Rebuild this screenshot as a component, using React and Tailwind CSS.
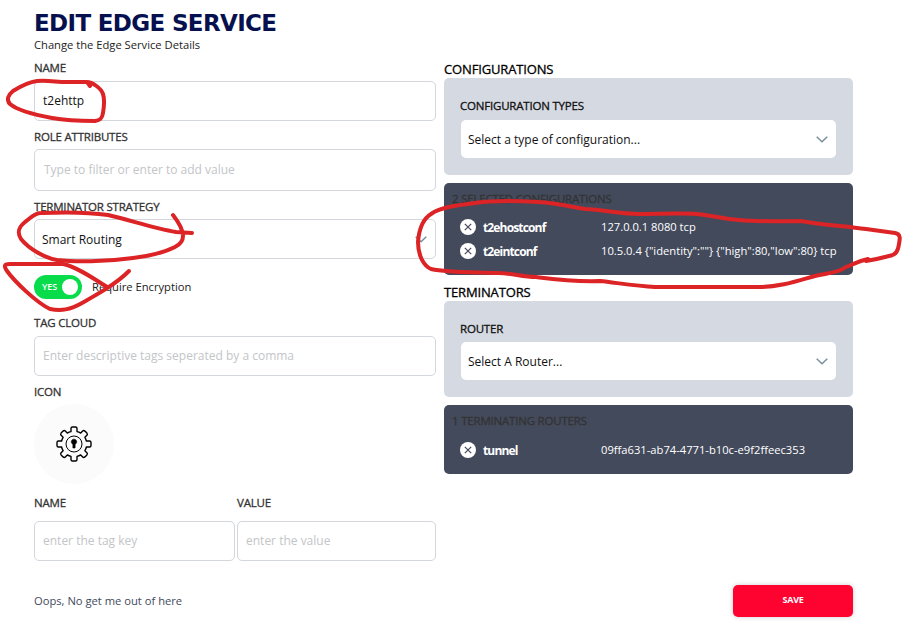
import React from "react";

const Label = ({ children, color = "text-[#333]", className = "" }) => (
  <div className={`flex items-center text-[11.5px] font-normal tracking-[-0.2px] [-webkit-text-stroke:0.3px] ${color} ${className}`}>{children}</div>
);

const Input = ({ value, placeholder, className = "" }) => (
  <div className={`flex items-center rounded-[5px] border border-[#d3d6da] bg-white pl-2 text-xs ${className}`}>
    {value ? <span className="text-[#111]">{value}</span> : <span className="text-[#c3c5c8]">{placeholder}</span>}
  </div>
);

const Chevron = () => (
  <svg width="12" height="7" viewBox="0 0 12 7" fill="none" stroke="#78909c" strokeWidth="1.5">
    <path d="M.7.8 6 5.7 11.3.8" />
  </svg>
);

const Select = ({ children, className = "" }) => (
  <div className={`flex items-center justify-between rounded-[5px] bg-white pl-[7px] pr-2 text-xs text-[#111] ${className}`}>
    <span className="pt-px">{children}</span>
    <Chevron />
  </div>
);

const Row = ({ name, value }) => (
  <div className="flex h-6 items-center text-[11.2px] text-white">
    <svg width="16" height="16" viewBox="0 0 16 16" className="shrink-0">
      <circle cx="8" cy="8" r="8" fill="#fff" />
      <path d="m4.8 4.8 6.4 6.4m0-6.4-6.4 6.4" stroke="#434a5c" strokeWidth="1.2" />
    </svg>
    <span className="ml-[7px] w-[118px] shrink-0 pt-px text-xs font-bold tracking-[-0.85px]">{name}</span>
    <span className="whitespace-nowrap pt-px">{value}</span>
  </div>
);

const Gear = () => (
  <svg width="36" height="36" viewBox="-18 -18 36 36" fill="none" stroke="#000" strokeWidth="1.4" strokeLinejoin="round">
    <path d="M-3-14V-15.5Q-3-17-1.5-17H1.5Q3-17 3-15.5V-12.4Q5-12 6.7-10.9L8.7-12.9Q9.7-13.9 10.9-12.9L12.9-10.9Q13.9-9.7 12.9-8.7L10.9-6.7Q12-5 12.4-3H15.5Q17-3 17-1.5V1.5Q17 3 15.5 3H12.4Q12 5 10.9 6.7L12.9 8.7Q13.9 9.7 12.9 10.9L10.9 12.9Q9.7 13.9 8.7 12.9L6.7 10.9Q5 12 3 12.4V15.5Q3 17 1.5 17H-1.5Q-3 17-3 15.5V12.4Q-5 12-6.7 10.9L-8.7 12.9Q-9.7 13.9-10.9 12.9L-12.9 10.9Q-13.9 9.7-12.9 8.7L-10.9 6.7Q-12 5-12.4 3H-15.5Q-17 3-17 1.5V-1.5Q-17-3-15.5-3H-12.4Q-12-5-10.9-6.7L-12.9-8.7Q-13.9-9.7-12.9-10.9L-10.9-12.9Q-9.7-13.9-8.7-12.9L-6.7-10.9Q-5-12-3-12.4Z" />
    <circle r="8" strokeWidth="1" />
    <path d="M-1.1 4V.3A2.7 2.7 0 1 1 1.1.3V4Z" fill="#000" strokeWidth=".6" />
  </svg>
);

const Marks = () => (
  <svg className="pointer-events-none absolute left-0 top-0" width="913" height="631" viewBox="0 0 913 631" fill="none" stroke="#dc2325" strokeWidth="4" strokeLinecap="round" strokeLinejoin="round">
    <path d="M90 86 87 82C92 82 101 88 103 94C105 100 104 107 103 113C102 119 100 120 95 121C80 121 63 120 52 118C36 115 17 110 10 104C6 100 8 95 13 91C21 86 29 82 37 81C47 80 57 82 66 82L86 82" />
    <path d="M173 215C180 224 183 230 183 236C183 241 181 244 175 247C163 253 149 256 133 258C105 262 74 262 57 260C45 258 29 249 21 239C16 231 20 226 25 222C31 218 34 213 41 213C63 212 88 212 108 215C130 220 153 228 176 232L192 233" />
    <path d="M129 271C116 284 98 294 82 303C70 310 61 311 50 309C37 303 15 282 7 271C3 265 5 264 10 264H63C75 266 93 278 107 287" />
    <path d="M868 259C858 261 854 264 846 267C838 273 828 273 815 276C797 281 780 287 760 287H655C636 286 618 283 600 281C575 282 552 279 536 277C522 277 512 273 498 273C475 272 449 273 431 269C424 266 418 256 418 242C419 229 423 219 431 214C441 207 459 205 475 203C497 200 520 201 538 202C557 203 567 206 585 209C605 210 620 214 639 214C660 214 678 213 697 214C715 216 723 219 739 220C760 222 779 221 801 221C823 225 845 226 866 229L895 233C901 234 900 239 899 244C898 251 896 255 889 256Q878 259 866 261" />
  </svg>
);

export default function App() {
  return (
    <div className="relative h-[631px] w-[913px] overflow-hidden bg-white pl-[34px] font-['Open_Sans',sans-serif] text-[11.2px]">
      <div className="h-[61px] pt-[9px]">
        <h1 className="h-7 whitespace-nowrap font-['DejaVu_Sans',sans-serif] text-[23px] font-bold leading-7 tracking-[-0.65px] text-[#06104f]">EDIT EDGE SERVICE</h1>
        <p className="h-4 leading-[15px] text-[#222]">Change the Edge Service Details</p>
      </div>
      <div className="flex h-[524px] gap-2">
        <div className="w-[402px]">
          <Label className="h-5 pb-[6px]">NAME</Label>
          <Input className="h-10" value="t2ehttp" />
          <Label className="h-7 pt-1">ROLE ATTRIBUTES</Label>
          <Input className="h-[42px] pl-[9px]" placeholder="Type to filter or enter to add value" />
          <Label className="h-7 pt-1">TERMINATOR STRATEGY</Label>
          <Select className="h-10 border border-[#d3d6da]">Smart Routing</Select>
          <div className="mt-4 flex h-6 items-center">
            <div className="flex h-6 w-12 items-center justify-between rounded-full bg-[#08dc4b] pl-2 pr-1 text-[9px] font-semibold text-white">
              YES
              <span className="size-4 rounded-full bg-white" />
            </div>
            <span className="ml-[10px] pt-px text-[#222]">Require Encryption</span>
          </div>
          <Label className="h-[37px] pt-[11px]">TAG CLOUD</Label>
          <Input className="h-10" placeholder="Enter descriptive tags seperated by a comma" />
          <Label className="h-7 pt-1">ICON</Label>
          <div className="flex size-20 items-center justify-center rounded-full bg-[#fbfbfb]">
            <Gear />
          </div>
          <div className="flex h-[37px] gap-[2px]">
            <Label className="w-[201px] pt-px">NAME</Label>
            <Label className="pt-px">VALUE</Label>
          </div>
          <div className="flex gap-[2px]">
            <Input className="h-10 w-[201px]" placeholder="enter the tag key" />
            <Input className="h-10 w-[199px]" placeholder="enter the value" />
          </div>
        </div>
        <div className="w-[409px]">
          <h2 className="h-[17px] text-[13px] font-normal leading-4 tracking-[-0.15px] text-black [-webkit-text-stroke:0.3px]">CONFIGURATIONS</h2>
          <div className="h-[97px] rounded-[5px] bg-[#d5d9e2] px-[17px] pt-4">
            <Label color="text-[#111]" className="-ml-px h-[26px] pb-[2px]">CONFIGURATION TYPES</Label>
            <Select className="h-[38px]">Select a type of configuration...</Select>
          </div>
          <div className="mt-2 h-[92px] rounded-[5px] bg-[#434a5c] pl-4 pt-2">
            <Label className="-ml-2 mb-[8px] h-4">2 SELECTED CONFIGURATIONS</Label>
            <Row name="t2ehostconf" value="127.0.0.1 8080 tcp" />
            <Row name="t2eintconf" value={'10.5.0.4 {"identity":""} {"high":80,"low":80} tcp'} />
          </div>
          <h2 className="h-[26px] pt-[9px] text-[13px] font-normal leading-4 tracking-[-0.15px] text-black [-webkit-text-stroke:0.3px]">TERMINATORS</h2>
          <div className="h-24 rounded-[5px] bg-[#d5d9e2] px-[17px] pt-4">
            <Label color="text-[#111]" className="-ml-px h-[25px] pb-px">ROUTER</Label>
            <Select className="h-[38px]">Select A Router...</Select>
          </div>
          <div className="mt-2 h-[69px] rounded-[5px] bg-[#434a5c] pl-4 pt-2">
            <Label className="-ml-2 mb-[9px] h-4">1 TERMINATING ROUTERS</Label>
            <Row name="tunnel" value="09ffa631-ab74-4771-b10c-e9f2ffeec353" />
          </div>
        </div>
      </div>
      <div className="flex h-8 w-[819px] items-center justify-between">
        <span className="pt-px text-[#434a5c]">Oops, No get me out of here</span>
        <button className="h-8 w-[120px] rounded-[5px] bg-[#ff0330] pb-[2px] text-[9px] font-bold tracking-[-0.3px] text-white shadow-[0_0_5px_#0003]">SAVE</button>
      </div>
      <Marks />
    </div>
  );
}
